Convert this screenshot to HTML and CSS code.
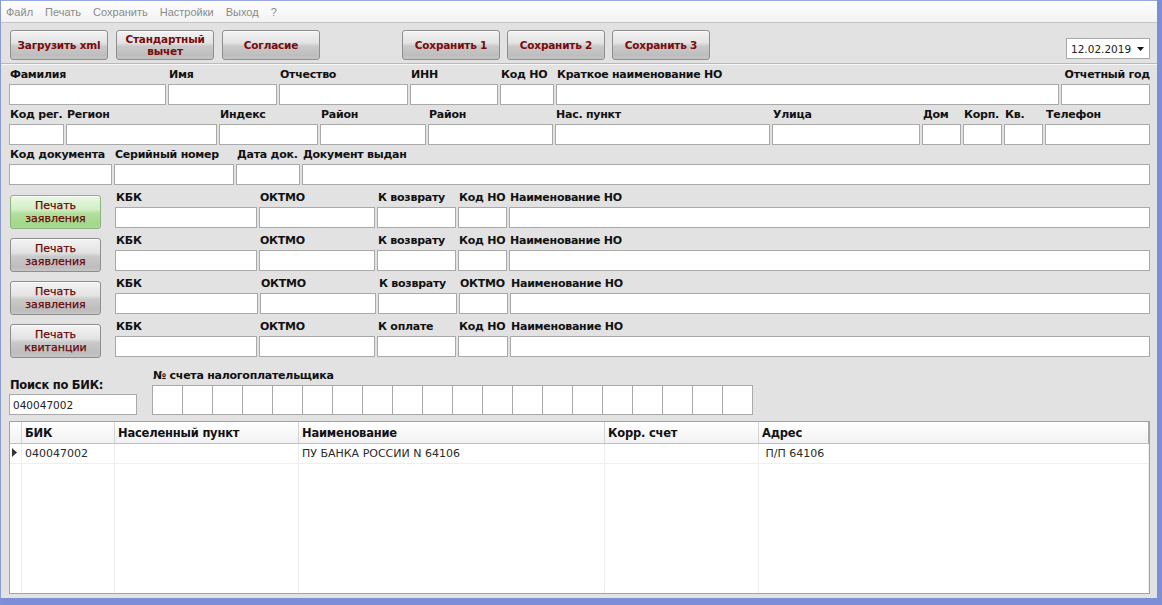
FILE: index.html
```html
<!DOCTYPE html>
<html lang="ru">
<head>
    <meta charset="UTF-8">
    <title>Возврат налога</title>
    <link rel="stylesheet" href="styles.css">
</head>
<body>
    <div class="window">
        <div class="menubar">
            <span>Файл</span>
            <span>Печать</span>
            <span>Сохранить</span>
            <span>Настройки</span>
            <span>Выход</span>
            <span>?</span>
        </div>

        <div class="toolbar">
            <div class="btn-group">
                <button class="btn">Загрузить xml</button>
                <button class="btn">Стандартный<br>вычет</button>
                <button class="btn">Согласие</button>
            </div>
            <div class="btn-group save-group">
                <button class="btn">Сохранить 1</button>
                <button class="btn">Сохранить 2</button>
                <button class="btn">Сохранить 3</button>
            </div>
            <div class="datepicker">
                <span>12.02.2019</span>
                <svg width="7" height="4" viewBox="0 0 7 4"><path d="M0 0h7L3.5 4z" fill="#111"/></svg>
            </div>
        </div>

        <div class="form">
            <div class="row row-person">
                <div class="field"><label>Фамилия</label><input type="text"></div>
                <div class="field"><label>Имя</label><input type="text"></div>
                <div class="field"><label>Отчество</label><input type="text"></div>
                <div class="field"><label>ИНН</label><input type="text"></div>
                <div class="field"><label>Код НО</label><input type="text"></div>
                <div class="field"><label>Краткое наименование НО</label><input type="text"></div>
                <div class="field right"><label>Отчетный год</label><input type="text"></div>
            </div>
            <div class="row row-address">
                <div class="field"><label>Код рег.</label><input type="text"></div>
                <div class="field"><label>Регион</label><input type="text"></div>
                <div class="field"><label>Индекс</label><input type="text"></div>
                <div class="field"><label>Район</label><input type="text"></div>
                <div class="field"><label>Район</label><input type="text"></div>
                <div class="field"><label>Нас. пункт</label><input type="text"></div>
                <div class="field"><label>Улица</label><input type="text"></div>
                <div class="field"><label>Дом</label><input type="text"></div>
                <div class="field"><label>Корп.</label><input type="text"></div>
                <div class="field"><label>Кв.</label><input type="text"></div>
                <div class="field"><label>Телефон</label><input type="text"></div>
            </div>
            <div class="row row-document">
                <div class="field"><label>Код документа</label><input type="text"></div>
                <div class="field"><label>Серийный номер</label><input type="text"></div>
                <div class="field"><label>Дата док.</label><input type="text"></div>
                <div class="field"><label>Документ выдан</label><input type="text"></div>
            </div>
        </div>

        <div class="print-list">
            <div class="print-row">
                <button class="btn btn-print green">Печать<br>заявления</button>
                <div class="row row-tax">
                    <div class="field"><label>КБК</label><input type="text"></div>
                    <div class="field"><label>ОКТМО</label><input type="text"></div>
                    <div class="field"><label>К возврату</label><input type="text"></div>
                    <div class="field"><label>Код НО</label><input type="text"></div>
                    <div class="field"><label>Наименование НО</label><input type="text"></div>
                </div>
            </div>
            <div class="print-row">
                <button class="btn btn-print">Печать<br>заявления</button>
                <div class="row row-tax">
                    <div class="field"><label>КБК</label><input type="text"></div>
                    <div class="field"><label>ОКТМО</label><input type="text"></div>
                    <div class="field"><label>К возврату</label><input type="text"></div>
                    <div class="field"><label>Код НО</label><input type="text"></div>
                    <div class="field"><label>Наименование НО</label><input type="text"></div>
                </div>
            </div>
            <div class="print-row">
                <button class="btn btn-print">Печать<br>заявления</button>
                <div class="row row-tax shifted">
                    <div class="field"><label>КБК</label><input type="text"></div>
                    <div class="field"><label>ОКТМО</label><input type="text"></div>
                    <div class="field"><label>К возврату</label><input type="text"></div>
                    <div class="field"><label>ОКТМО</label><input type="text"></div>
                    <div class="field"><label>Наименование НО</label><input type="text"></div>
                </div>
            </div>
            <div class="print-row">
                <button class="btn btn-print">Печать<br>квитанции</button>
                <div class="row row-tax last">
                    <div class="field"><label>КБК</label><input type="text"></div>
                    <div class="field"><label>ОКТМО</label><input type="text"></div>
                    <div class="field"><label>К оплате</label><input type="text"></div>
                    <div class="field"><label>Код НО</label><input type="text"></div>
                    <div class="field"><label>Наименование НО</label><input type="text"></div>
                </div>
            </div>
        </div>

        <div class="bank">
            <div class="field bik">
                <label>Поиск по БИК:</label>
                <input type="text" value="040047002">
            </div>
            <div class="field account">
                <label>№ счета налогоплательщика</label>
                <div class="digits">
                    <span></span><span></span><span></span><span></span><span></span>
                    <span></span><span></span><span></span><span></span><span></span>
                    <span></span><span></span><span></span><span></span><span></span>
                    <span></span><span></span><span></span><span></span><span></span>
                </div>
            </div>
        </div>

        <div class="grid">
            <table>
                <thead>
                    <tr>
                        <th class="marker"></th>
                        <th class="col-bik">БИК</th>
                        <th class="col-city">Населенный пункт</th>
                        <th class="col-name">Наименование</th>
                        <th class="col-corr">Корр. счет</th>
                        <th>Адрес</th>
                    </tr>
                </thead>
                <tbody>
                    <tr class="current">
                        <td class="marker"><svg width="5" height="9" viewBox="0 0 5 9"><path d="M0 0l5 4.5L0 9z" fill="#333"/></svg></td>
                        <td>040047002</td>
                        <td></td>
                        <td>ПУ БАНКА РОССИИ N 64106</td>
                        <td></td>
                        <td>&nbsp;П/П 64106</td>
                    </tr>
                    <tr class="filler">
                        <td class="marker"></td>
                        <td></td>
                        <td></td>
                        <td></td>
                        <td></td>
                        <td></td>
                    </tr>
                </tbody>
            </table>
        </div>
    </div>
</body>
</html>
```

FILE: styles.css
```css
html, body {
    margin: 0;
    padding: 0;
}

body {
    font-family: "DejaVu Sans", Tahoma, sans-serif;
    font-size: 11px;
    color: #111;
    background-color: #e2e2e2;
}

.window {
    width: 1162px;
    height: 605px;
    box-sizing: border-box;
    background-color: #e2e2e2;
    border-left: 1px solid #8a9ad6;
    border-right: 5px solid #7d8ed4;
    border-bottom: 7px solid #7d8ed4;
    display: flex;
    flex-direction: column;
    overflow: hidden;
}

/* menu */
.menubar {
    height: 21px;
    display: flex;
    align-items: center;
    padding-left: 5px;
    gap: 12px;
    background: linear-gradient(#fdfdfd, #f3f3f3);
    border-top: 1px solid #9aa8de;
    border-bottom: 1px solid #c4c4c4;
    color: #8a8a8a;
    font-family: "Liberation Sans", Arial, sans-serif;
    font-size: 11px;
}

/* toolbar */
.toolbar {
    height: 33px;
    padding-top: 7px;
    padding-left: 9px;
    padding-right: 7px;
    display: flex;
    align-items: flex-start;
    border-bottom: 1px solid #b9b9b9;
    box-shadow: 0 1px 0 #f6f6f6;
}

.btn-group {
    display: flex;
    gap: 8px;
}

.save-group {
    margin-left: 82px;
    gap: 7px;
}

.btn {
    width: 98px;
    height: 30px;
    padding: 0;
    font-family: "DejaVu Sans", Tahoma, sans-serif;
    font-size: 10.5px;
    font-weight: bold;
    line-height: 12px;
    letter-spacing: -0.2px;
    color: #7a0b0b;
    border: 1px solid #8e8e8e;
    border-radius: 3px;
    background: linear-gradient(#f3f3f3 0%, #e3e3e3 42%, #c9c9c9 55%, #bdbdbd 88%, #c6c6c6 100%);
    box-shadow: inset 0 1px 0 #fafafa;
    cursor: pointer;
}

.datepicker {
    margin-left: auto;
    margin-top: 8px;
    width: 84px;
    height: 21px;
    box-sizing: border-box;
    background-color: #fff;
    border: 1px solid #a8a8a8;
    display: flex;
    align-items: center;
    justify-content: space-between;
    padding: 0 5px 0 4px;
    font-size: 10.5px;
    color: #222;
}

/* form rows */
.form {
    padding: 4px 7px 0 8px;
    display: flex;
    flex-direction: column;
    gap: 3px;
}

.row {
    display: grid;
    column-gap: 2px;
}

.row-person {
    grid-template-columns: 157px 109px 129px 88px 54px 503px 89px;
}

.row-address {
    grid-template-columns: 55px 151px 99px 106px 125px 215px 148px 39px 39px 39px 105px;
}

.row-document {
    grid-template-columns: 103px 120px 64px 848px;
}

.field {
    display: flex;
    flex-direction: column;
}

.field label {
    height: 14px;
    line-height: 14px;
    margin-bottom: 2px;
    padding-left: 1px;
    font-weight: bold;
    font-size: 11px;
    letter-spacing: -0.25px;
    white-space: nowrap;
    color: #111;
}

.field.right label {
    text-align: right;
}

.field input {
    width: 100%;
    height: 21px;
    box-sizing: border-box;
    margin: 0;
    border: 1px solid #a9a9a9;
    background-color: #fff;
    padding: 0 3px;
    font-family: "DejaVu Sans", Tahoma, sans-serif;
    font-size: 10.5px;
    color: #222;
}

/* print rows */
.print-list {
    padding: 6px 7px 0 8px;
    display: flex;
    flex-direction: column;
    gap: 6px;
}

.print-row {
    display: flex;
    align-items: flex-end;
    gap: 14px;
}

.row-tax {
    grid-template-columns: 142px 116px 79px 49px 641px;
}

.row-tax.shifted {
    grid-template-columns: 143px 116px 79px 49px 640px;
}

.row-tax.last {
    grid-template-columns: 142px 116px 79px 50px 640px;
}

.btn-print {
    width: 91px;
    height: 34px;
    margin-left: 1px;
    margin-bottom: -1px;
    font-weight: normal;
    font-size: 11px;
    line-height: 13px;
    letter-spacing: 0;
    color: #6a0505;
    -webkit-text-stroke: 0.25px #6a0505;
}

.btn-print.green {
    border-color: #8db37e;
    background: linear-gradient(#e9f7e2 0%, #d2eec6 42%, #b1df9c 55%, #a3d78b 90%, #aedb98 100%);
}

/* bank search */
.bank {
    padding: 12px 7px 0 8px;
    display: flex;
    align-items: flex-end;
    gap: 15px;
}

.bik {
    width: 128px;
}

.bik label {
    font-size: 11.5px;
}

.account label {
    margin-bottom: 2px;
}

.digits {
    display: flex;
}

.digits span {
    width: 29px;
    height: 28px;
    background-color: #fff;
    border: 1px solid #a9a9a9;
    margin-right: -1px;
}

/* bank grid */
.grid {
    margin: 6px 7px 0 8px;
    height: 173px;
    box-sizing: border-box;
    border: 1px solid #a3a3a3;
    background-color: #fff;
    overflow: hidden;
}

.grid table {
    width: 1139px;
    border-collapse: collapse;
    table-layout: fixed;
}

.grid th {
    height: 21px;
    padding: 0 0 0 3px;
    text-align: left;
    font-size: 11.5px;
    letter-spacing: -0.2px;
    color: #111;
    background: linear-gradient(#ffffff, #f1f1f3);
    border-right: 1px solid #d4d4d4;
    border-bottom: 1px solid #bfbfbf;
}

.grid th:last-child {
    border-right: 1px solid #a9a9a9;
}

.grid td {
    height: 19px;
    padding: 0 0 0 3px;
    font-size: 11px;
    color: #2a2a2a;
    border-right: 1px solid #eeeeee;
    border-bottom: 1px solid #efefef;
    white-space: nowrap;
}

.grid .filler td {
    height: 130px;
    border-bottom: none;
}

.grid .marker {
    width: 9px;
    padding: 0 0 0 2px;
}

.grid .col-bik {
    width: 89px;
}

.grid .col-city {
    width: 180px;
}

.grid .col-name {
    width: 302px;
}

.grid .col-corr {
    width: 150px;
}
```
